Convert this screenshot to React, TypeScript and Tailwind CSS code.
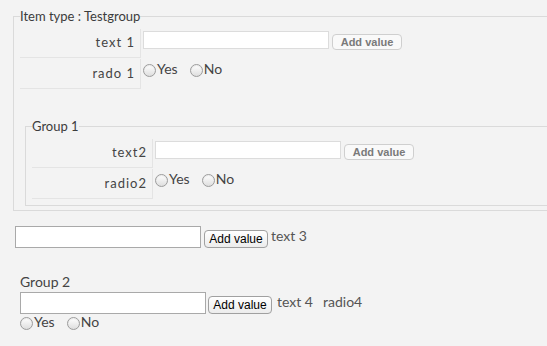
import React from "react";

function Radio({ label }: { label: string }) {
  return (
    <label className="inline-flex items-center">
      <span className="inline-block h-[13px] w-[13px] rounded-full border border-[#9c9c9c] bg-linear-to-b from-white to-[#dedede] shadow-[inset_0_1px_1px_rgba(0,0,0,0.08)]" />
      <span className="ml-[1px] -mt-[3px] text-[14px] leading-[14px]">{label}</span>
    </label>
  );
}

function Radios({ className = "" }: { className?: string }) {
  return (
    <div className={`flex gap-[12px] ${className}`}>
      <Radio label="Yes" />
      <Radio label="No" />
    </div>
  );
}

function SmallButton() {
  return (
    <button className="h-[16px] w-[70px] rounded-[4px] border border-[#cfcfcf] bg-[#f9f9f9] font-['Liberation_Sans',sans-serif] text-[11px] leading-[14px] font-bold text-[#7a7a7a]">
      Add value
    </button>
  );
}

function MacButton() {
  return (
    <button className="h-[18px] w-[64px] rounded-[4px] border border-[#a0a0a0] bg-linear-to-b from-white to-[#ececec] font-['Liberation_Sans',sans-serif] text-[12px] leading-[16px] text-black">
      Add value
    </button>
  );
}

function Row({ label, children, tall = false }: { label: string; children: React.ReactNode; tall?: boolean }) {
  return (
    <div className={`flex ${tall ? "h-[30px]" : "h-[29px]"}`}>
      <div className="flex w-[121px] shrink-0 items-center justify-end border-r border-b border-[#e4e4e4] pr-[5px] tracking-[1px] text-[#444]">
        {label}
      </div>
      <div className="pl-[2px] pt-[2px]">{children}</div>
    </div>
  );
}

function TextRow({ label }: { label: string }) {
  return (
    <Row label={label}>
      <div className="flex items-start gap-[3px]">
        <input className="h-[18px] w-[186px] border border-[#dcdcdc] bg-white" />
        <div className="pt-[1px]">
          <SmallButton />
        </div>
      </div>
    </Row>
  );
}

function RadioRow({ label }: { label: string }) {
  return (
    <Row label={label} tall>
      <Radios className="pt-[3px]" />
    </Row>
  );
}

export default function App() {
  return (
    <div className="h-[346px] w-[547px] overflow-hidden bg-[#f3f3f3] pt-[8px] font-['Lato',sans-serif] text-[13px] text-[#444]">
      <fieldset className="ml-[13px] w-[600px] border border-[#dadada] px-[6px] pb-[4px]">
        <legend className="leading-[16px] text-[#3c3c3c]">Item type : Testgroup</legend>
        <div className="mt-[5px] flex flex-col gap-[1px]">
          <TextRow label="text 1" />
          <RadioRow label="rado 1" />
        </div>
        <fieldset className="mt-[29px] ml-[5px] border border-[#dadada] px-[6px] pb-[6px]">
          <legend className="leading-[16px] text-[#3c3c3c]">Group 1</legend>
          <div className="mt-[5px] flex flex-col gap-[1px]">
            <TextRow label="text2" />
            <RadioRow label="radio2" />
          </div>
        </fieldset>
      </fieldset>

      <div className="mt-[15px] ml-[15px] flex items-start gap-[3px] text-[14px]">
        <input className="h-[22px] w-[186px] border border-[#a9a9a9] bg-white" />
        <div className="pt-[1px]">
          <MacButton />
        </div>
        <span className="leading-[20px] text-[#555]">text 3</span>
      </div>

      <div className="mt-[26px] ml-[20px] text-[14px]">
        <div className="leading-[16px]">Group 2</div>
        <div className="mt-[2px] flex items-start gap-[2px]">
          <input className="h-[22px] w-[186px] border border-[#a9a9a9] bg-white" />
          <div className="pt-[1px]">
            <MacButton />
          </div>
          <span className="ml-[3px] leading-[20px] text-[#555]">text 4</span>
          <span className="ml-[8px] leading-[20px] text-[#555]">radio4</span>
        </div>
        <Radios className="mt-[3px]" />
      </div>
    </div>
  );
}
